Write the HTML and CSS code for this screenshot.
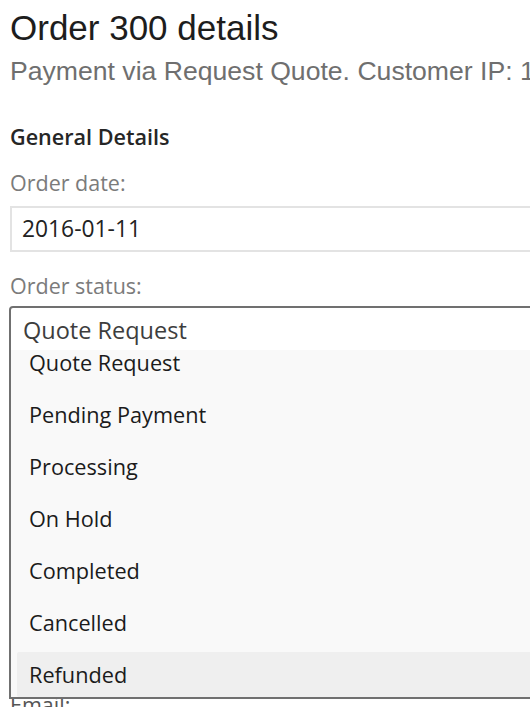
FILE: index.html
```html
<!DOCTYPE html>
<html lang="en">
<head>
<meta charset="utf-8">
<title>Order 300 details</title>
<link rel="stylesheet" href="styles.css">
</head>
<body>
<div class="page">
  <h1 class="title">Order 300 details</h1>
  <p class="subtitle">Payment via Request Quote. Customer IP: 127.0.0.1</p>

  <h2 class="section">General Details</h2>

  <label class="label label-date">Order date:</label>
  <div class="input input-date">2016-01-11</div>

  <label class="label label-status">Order status:</label>
  <div class="select">
    <div class="select-head">Quote Request</div>
    <ul class="dropdown">
      <li class="option">Quote Request</li>
      <li class="option">Pending Payment</li>
      <li class="option">Processing</li>
      <li class="option">On Hold</li>
      <li class="option">Completed</li>
      <li class="option">Cancelled</li>
      <li class="option option-active">Refunded</li>
    </ul>
  </div>

  <div class="input input-customer"></div>
  <div class="input input-address"></div>

  <label class="label label-email">Email:</label>
  <div class="input input-email"></div>
</div>
</body>
</html>
```

FILE: styles.css
```css
html {
  overflow: hidden;
}

body {
  margin: 0;
  padding: 0;
  background: #ffffff;
}

.page {
  width: 640px;
  padding-left: 10px;
  padding-bottom: 40px;
  font-family: "Open Sans", "Liberation Sans", sans-serif;
  display: flex;
  flex-direction: column;
  align-items: stretch;
}

.title {
  margin: 8px 0 0;
  font-family: "Liberation Sans", Arial, sans-serif;
  font-weight: normal;
  font-size: 35px;
  line-height: 40px;
  color: #1d1d1d;
  white-space: nowrap;
}

.subtitle {
  margin: 8px 0 0;
  font-family: "Liberation Sans", Arial, sans-serif;
  font-size: 26.6px;
  line-height: 30px;
  color: #6f6f6f;
  white-space: nowrap;
}

.section {
  margin: 37px 0 0;
  font-size: 21.6px;
  line-height: 28px;
  font-weight: 600;
  color: #262626;
}

.label {
  display: block;
  font-size: 21.5px;
  line-height: 28px;
  color: #7b7b7b;
}

.label-date { margin-top: 18px; }
.label-status { margin-top: 20px; }
.label-email { margin-top: 19px; color: #555555; }

.input {
  box-sizing: border-box;
  margin-top: 9px;
  height: 46px;
  padding-left: 10px;
  border: 2px solid #e3e3e3;
  font-size: 22.8px;
  line-height: 42px;
  color: #222222;
  background: #ffffff;
}

.input-customer { margin-top: 20px; }
.input-address { margin-top: 20px; height: 236px; }

.select {
  position: relative;
  margin-top: 6px;
  margin-left: -1px;
}

.select-head {
  position: relative;
  z-index: 2;
  box-sizing: border-box;
  height: 44px;
  padding: 2px 0 0 12px;
  border: 2px solid #707070;
  border-bottom: none;
  border-radius: 4px 4px 0 0;
  background: #ffffff;
  font-size: 23.5px;
  line-height: 40px;
  color: #3d3d3d;
}

.dropdown {
  position: absolute;
  z-index: 1;
  top: 34px;
  left: 0;
  right: 0;
  margin: 0;
  padding: 0 6px;
  list-style: none;
  background: #f9f9f9;
  border: 2px solid #707070;
  border-top: none;
  display: flex;
  flex-direction: column;
  gap: 7px;
}

.option {
  height: 45px;
  padding-left: 12px;
  font-size: 21.7px;
  line-height: 46px;
  color: #1b1b1b;
  border-radius: 2px;
}

.option-active {
  background: #efefef;
}
```
